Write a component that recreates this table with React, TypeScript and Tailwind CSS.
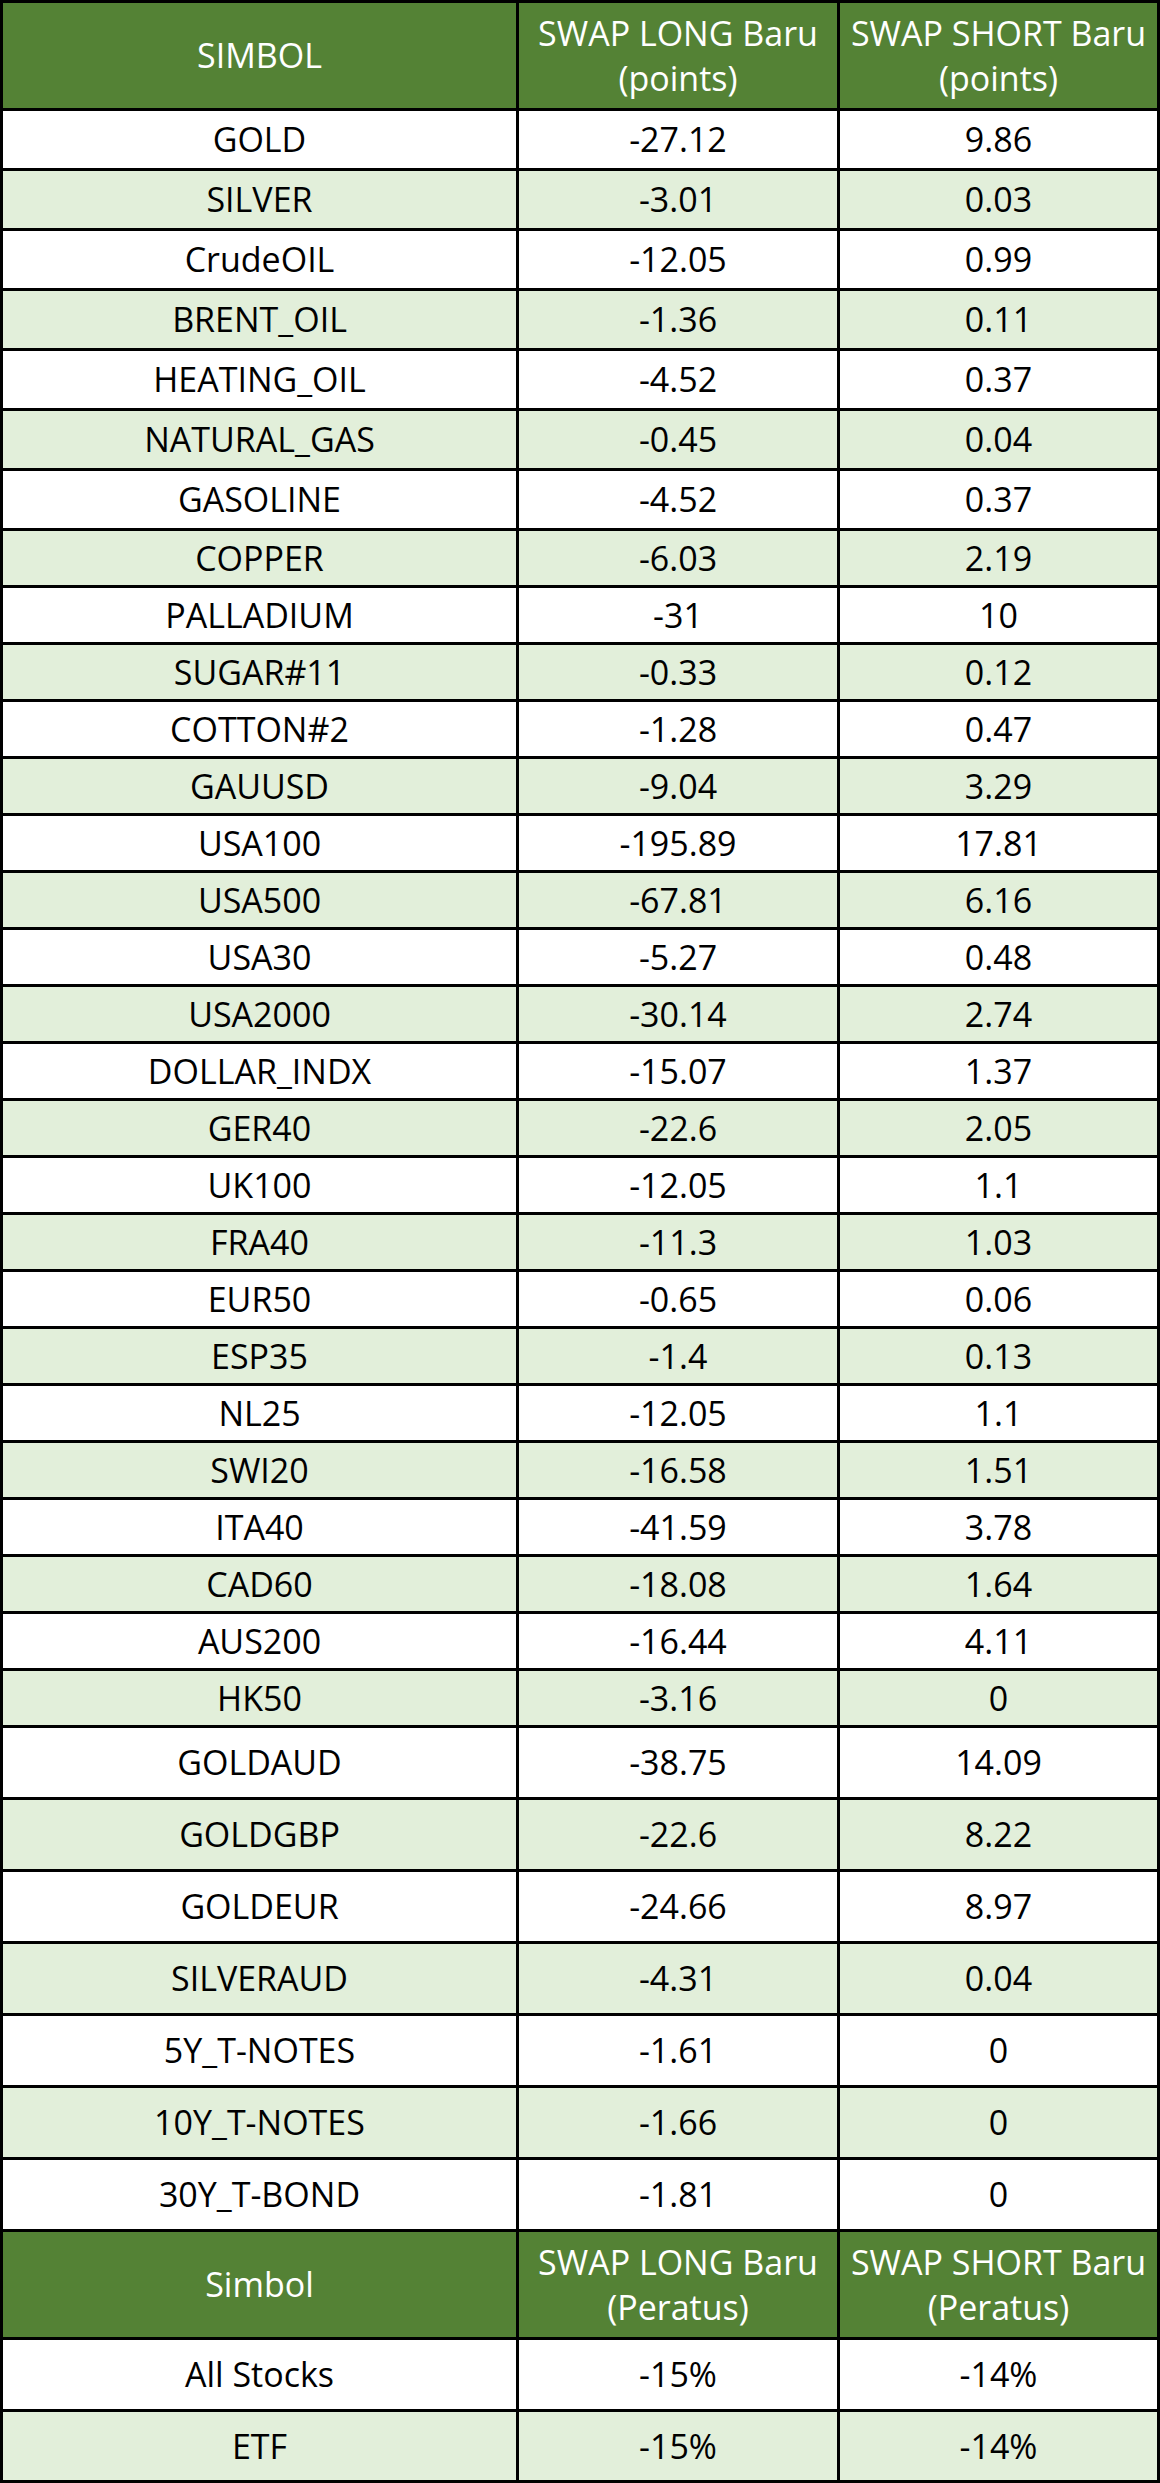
import React from 'react';

type Row = { sym: string; long: string; short: string; h: string };

const points: Row[] = [
  { sym: 'GOLD', long: '-27.12', short: '9.86', h: 'h-[57px]' },
  { sym: 'SILVER', long: '-3.01', short: '0.03', h: 'h-[57px]' },
  { sym: 'CrudeOIL', long: '-12.05', short: '0.99', h: 'h-[57px]' },
  { sym: 'BRENT_OIL', long: '-1.36', short: '0.11', h: 'h-[57px]' },
  { sym: 'HEATING_OIL', long: '-4.52', short: '0.37', h: 'h-[57px]' },
  { sym: 'NATURAL_GAS', long: '-0.45', short: '0.04', h: 'h-[57px]' },
  { sym: 'GASOLINE', long: '-4.52', short: '0.37', h: 'h-[57px]' },
  { sym: 'COPPER', long: '-6.03', short: '2.19', h: 'h-[54px]' },
  { sym: 'PALLADIUM', long: '-31', short: '10', h: 'h-[54px]' },
  { sym: 'SUGAR#11', long: '-0.33', short: '0.12', h: 'h-[54px]' },
  { sym: 'COTTON#2', long: '-1.28', short: '0.47', h: 'h-[54px]' },
  { sym: 'GAUUSD', long: '-9.04', short: '3.29', h: 'h-[54px]' },
  { sym: 'USA100', long: '-195.89', short: '17.81', h: 'h-[54px]' },
  { sym: 'USA500', long: '-67.81', short: '6.16', h: 'h-[54px]' },
  { sym: 'USA30', long: '-5.27', short: '0.48', h: 'h-[54px]' },
  { sym: 'USA2000', long: '-30.14', short: '2.74', h: 'h-[54px]' },
  { sym: 'DOLLAR_INDX', long: '-15.07', short: '1.37', h: 'h-[54px]' },
  { sym: 'GER40', long: '-22.6', short: '2.05', h: 'h-[54px]' },
  { sym: 'UK100', long: '-12.05', short: '1.1', h: 'h-[54px]' },
  { sym: 'FRA40', long: '-11.3', short: '1.03', h: 'h-[54px]' },
  { sym: 'EUR50', long: '-0.65', short: '0.06', h: 'h-[54px]' },
  { sym: 'ESP35', long: '-1.4', short: '0.13', h: 'h-[54px]' },
  { sym: 'NL25', long: '-12.05', short: '1.1', h: 'h-[54px]' },
  { sym: 'SWI20', long: '-16.58', short: '1.51', h: 'h-[54px]' },
  { sym: 'ITA40', long: '-41.59', short: '3.78', h: 'h-[54px]' },
  { sym: 'CAD60', long: '-18.08', short: '1.64', h: 'h-[54px]' },
  { sym: 'AUS200', long: '-16.44', short: '4.11', h: 'h-[54px]' },
  { sym: 'HK50', long: '-3.16', short: '0', h: 'h-[54px]' },
  { sym: 'GOLDAUD', long: '-38.75', short: '14.09', h: 'h-[69px]' },
  { sym: 'GOLDGBP', long: '-22.6', short: '8.22', h: 'h-[69px]' },
  { sym: 'GOLDEUR', long: '-24.66', short: '8.97', h: 'h-[69px]' },
  { sym: 'SILVERAUD', long: '-4.31', short: '0.04', h: 'h-[69px]' },
  { sym: '5Y_T-NOTES', long: '-1.61', short: '0', h: 'h-[69px]' },
  { sym: '10Y_T-NOTES', long: '-1.66', short: '0', h: 'h-[69px]' },
  { sym: '30Y_T-BOND', long: '-1.81', short: '0', h: 'h-[69px]' },
];

const percent: Row[] = [
  { sym: 'All Stocks', long: '-15%', short: '-14%', h: 'h-[69px]' },
  { sym: 'ETF', long: '-15%', short: '-14%', h: 'h-[68px]' },
];

function HeaderCell({ children }: { children: React.ReactNode }) {
  return (
    <div className="h-[105px] bg-[#548235] text-white flex items-center justify-center text-center leading-[45px] whitespace-nowrap">
      {children}
    </div>
  );
}

function Rows({ rows }: { rows: Row[] }) {
  return (
    <>
      {rows.map((r, i) => {
        const bg = i % 2 === 1 ? 'bg-[#e2efda]' : 'bg-white';
        return (
          <React.Fragment key={r.sym}>
            <div className={`${r.h} ${bg} flex items-center justify-center`}>{r.sym}</div>
            <div className={`${r.h} ${bg} flex items-center justify-center`}>{r.long}</div>
            <div className={`${r.h} ${bg} flex items-center justify-center`}>{r.short}</div>
          </React.Fragment>
        );
      })}
    </>
  );
}

export default function App() {
  return (
    <div
      className="w-[1160px] bg-black p-[3px] grid grid-cols-[513px_318px_317px] gap-[3px] text-black text-[34px] font-medium"
      style={{ fontFamily: '"Open Sans", "Noto Sans", sans-serif' }}
    >
      <HeaderCell>SIMBOL</HeaderCell>
      <HeaderCell>
        SWAP LONG Baru
        <br />
        (points)
      </HeaderCell>
      <HeaderCell>
        SWAP SHORT Baru
        <br />
        (points)
      </HeaderCell>
      <Rows rows={points} />
      <HeaderCell>Simbol</HeaderCell>
      <HeaderCell>
        SWAP LONG Baru
        <br />
        (Peratus)
      </HeaderCell>
      <HeaderCell>
        SWAP SHORT Baru
        <br />
        (Peratus)
      </HeaderCell>
      <Rows rows={percent} />
    </div>
  );
}
